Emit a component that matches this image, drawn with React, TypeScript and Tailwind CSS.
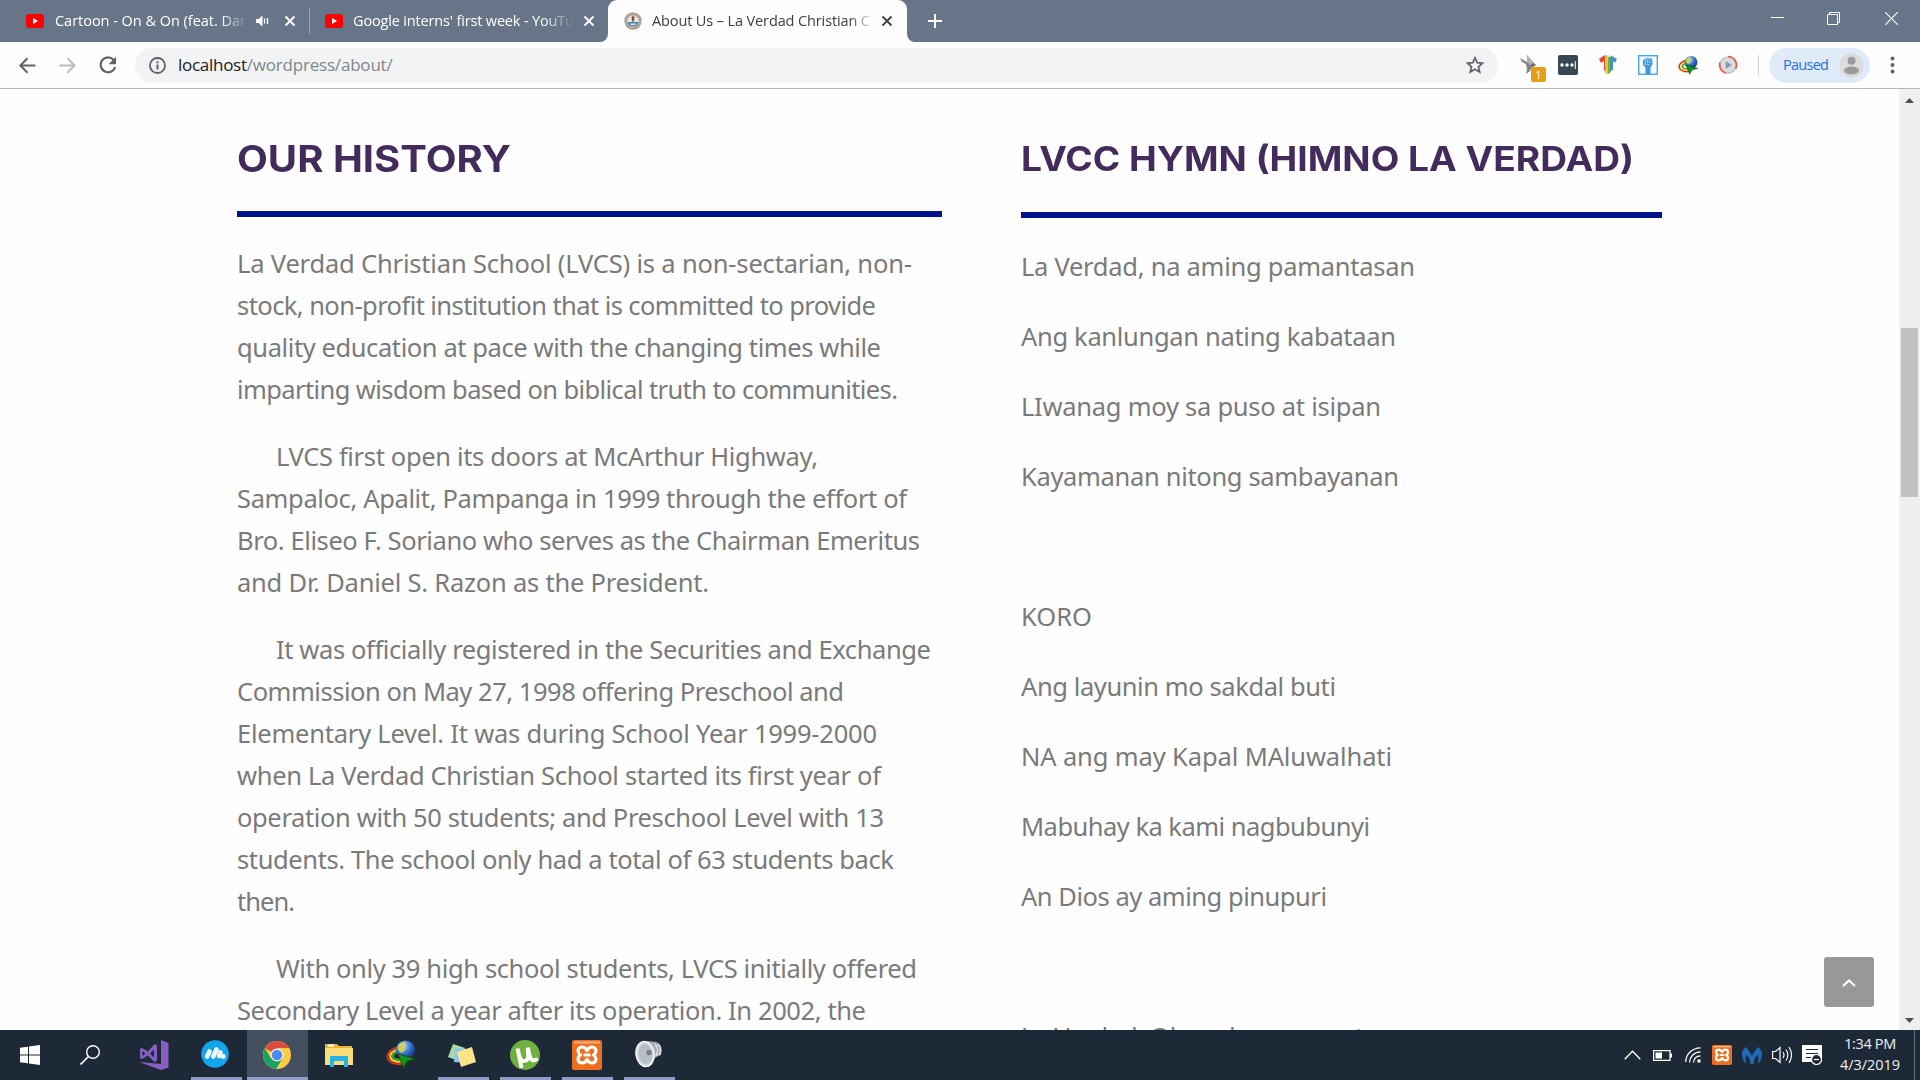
import { useLayoutEffect, useRef, type ReactNode } from "react";

/** One line of text tracked (or, with `stretch`, widened) so that it spans exactly `w` pixels. */
function Fit({ w, children, className = "", stretch = false }: { w: number; children: string; className?: string; stretch?: boolean }) {
  const ref = useRef<HTMLSpanElement>(null);
  useLayoutEffect(() => {
    const el = ref.current;
    if (!el) return;
    el.style.letterSpacing = "0px";
    el.style.transform = "none";
    const natural = el.getBoundingClientRect().width;
    if (stretch) el.style.transform = `scaleX(${w / natural})`;
    else el.style.letterSpacing = `${(w - natural) / (children.length - 1)}px`;
  }, [w, children, stretch]);
  return (
    <span ref={ref} className={`inline-block origin-left whitespace-pre ${className}`}>
      {children}
    </span>
  );
}

type TextLine = [text: string, width: number];

const history: TextLine[][] = [
  [
    ["La Verdad Christian School (LVCS) is a non-sectarian, non-", 675],
    ["stock, non-profit institution that is committed to provide", 639],
    ["quality education at pace with the changing times while", 644],
    ["imparting wisdom based on biblical truth to communities.", 661],
  ],
  [
    ["LVCS first open its doors at McArthur Highway,", 542],
    ["Sampaloc, Apalit, Pampanga in 1999 through the effort of", 670],
    ["Bro. Eliseo F. Soriano who serves as the Chairman Emeritus", 683],
    ["and Dr. Daniel S. Razon as the President.", 472],
  ],
  [
    ["It was officially registered in the Securities and Exchange", 655],
    ["Commission on May 27, 1998 offering Preschool and", 607],
    ["Elementary Level. It was during School Year 1999-2000", 640],
    ["when La Verdad Christian School started its first year of", 644],
    ["operation with 50 students; and Preschool Level with 13", 647],
    ["students. The school only had a total of 63 students back", 657],
    ["then.", 58],
  ],
  [
    ["With only 39 high school students, LVCS initially offered", 641],
    ["Secondary Level a year after its operation. In 2002, the", 629],
  ],
];

const hymn: TextLine[] = [
  ["La Verdad, na aming pamantasan", 394],
  ["Ang kanlungan nating kabataan", 375],
  ["LIwanag moy sa puso at isipan", 360],
  ["Kayamanan nitong sambayanan", 378],
  ["", 0],
  ["KORO", 71],
  ["Ang layunin mo sakdal buti", 315],
  ["NA ang may Kapal MAluwalhati", 371],
  ["Mabuhay ka kami nagbubunyi", 349],
  ["An Dios ay aming pinupuri", 306],
  ["", 0],
  ["La Verdad, Oh aming pamantasan", 398],
];

function YouTube() {
  return (
    <svg className="h-[14px] w-[18px] shrink-0" viewBox="0 0 18 14">
      <rect width="18" height="14" rx="3" fill="#f00" />
      <path d="M7 4v6l5-3z" fill="#fff" />
    </svg>
  );
}

function Cross({ color }: { color: string }) {
  return (
    <svg className="h-[12px] w-[12px] shrink-0" viewBox="0 0 12 12">
      <path d="M1.5 1.5l9 9M10.5 1.5l-9 9" stroke={color} strokeWidth="1.9" />
    </svg>
  );
}

function SchoolSeal() {
  return (
    <svg className="h-[18px] w-[18px] shrink-0" viewBox="0 0 18 18">
      <circle cx="9" cy="9" r="8.7" fill="#a39a8f" />
      <circle cx="9" cy="9" r="7.2" fill="none" stroke="#cfc9c0" strokeDasharray="1 1" />
      <circle cx="9" cy="9" r="5.8" fill="#e9e7e4" />
      <path d="M3.5 10h11a5.7 5.7 0 0 1-11 0z" fill="#3f84ab" />
      <path d="M6 11.500h6l-1 1.600H7z" fill="#e9eef2" />
      <path d="M9 3.200l2 2.800H7z" fill="#c2453a" />
      <path d="M7.800 5h2.400v4.500H7.800z" fill="#8a4642" />
    </svg>
  );
}

function TabBar() {
  return (
    <div className="flex h-[42px] bg-[#687588] font-['Open_Sans'] text-[14.500px] leading-[40px]">
      <div className="flex w-[309px] items-center pl-[26px]">
        <YouTube />
        <div className="ml-[11px] w-[192px] overflow-hidden text-white [mask-image:linear-gradient(to_right,#000_165px,transparent_194px)]">
          <Fit w={191}>Cartoon - On & On (feat. Dar</Fit>
        </div>
        <svg className="ml-[9px] h-[12px] w-[13px] shrink-0" viewBox="0 0 13 12">
          <path d="M0 4h2.500L6.500 .5v11L2.500 8H0z" fill="#fff" />
          <path d="M8.500 3.500v5M11.500 3v6" stroke="#fff" strokeWidth="1.300" />
        </svg>
        <div className="ml-[15px] flex">
          <Cross color="#fff" />
        </div>
      </div>
      <div className="mt-[9px] h-[25px] w-px bg-[#9ba4b0]" />
      <div className="flex w-[298px] items-center pl-[15px]">
        <YouTube />
        <div className="ml-[10px] w-[221px] overflow-hidden text-white [mask-image:linear-gradient(to_right,#000_190px,transparent_221px)]">
          <Fit w={221}>Google interns' first week - YouTu</Fit>
        </div>
        <div className="ml-[9px] flex">
          <Cross color="#fff" />
        </div>
      </div>
      <div className="flex flex-1">
        <svg className="-ml-[8px] mt-[34px] h-[8px] w-[8px] shrink-0" viewBox="0 0 8 8">
          <path d="M8 0v8H0a8 8 0 0 0 8-8z" fill="#fefefe" />
        </svg>
        <div className="flex w-[299px] items-center rounded-t-[9px] bg-[#fefefe] pl-[16px] text-[#3c4043]">
          <SchoolSeal />
          <div className="ml-[10px] w-[219px] overflow-hidden [mask-image:linear-gradient(to_right,#000_198px,transparent_222px)]">
            <Fit w={218}>About Us – La Verdad Christian C</Fit>
          </div>
          <div className="ml-[10px] flex">
            <Cross color="#3f4347" />
          </div>
        </div>
        <svg className="mt-[34px] h-[8px] w-[8px] shrink-0" viewBox="0 0 8 8">
          <path d="M0 0v8h8a8 8 0 0 1-8-8z" fill="#fefefe" />
        </svg>
        <svg className="mt-[13px] ml-[12px] h-[16px] w-[16px]" viewBox="0 0 16 16">
          <path d="M8 1v14M1 8h14" stroke="#fff" strokeWidth="2" />
        </svg>
      </div>
      <div className="flex pt-[12px] pr-[22px]">
        <svg className="h-[13px] w-[13px]" viewBox="0 0 13 13">
          <path d="M0 5.500h13" stroke="#fff" />
        </svg>
        <svg className="ml-[43px] h-[13px] w-[13px]" viewBox="0 0 13 13">
          <path d="M.5 2.500h10v10H.5zM2.500 2.500V.5h10v10h-2" stroke="#fff" fill="none" />
        </svg>
        <svg className="ml-[45px] h-[13px] w-[13px]" viewBox="0 0 13 13">
          <path d="M.3.3l12.400 12.400M12.700.3L.3 12.700" stroke="#fff" strokeWidth="1.100" />
        </svg>
      </div>
    </div>
  );
}

function IdmGlobe({ className }: { className: string }) {
  return (
    <svg className={`shrink-0 ${className}`} viewBox="0 0 30 28">
      <defs>
        <radialGradient id="globe" cx=".38" cy=".3" r=".75">
          <stop offset="0" stopColor="#cfe6ff" />
          <stop offset=".45" stopColor="#3a7fd6" />
          <stop offset="1" stopColor="#0d2a6a" />
        </radialGradient>
      </defs>
      <path d="M13 7C4 9 .5 14 2 18.500s9 6.500 15 5" fill="none" stroke="#d9341b" strokeWidth="2.200" />
      <path d="M13 9.200C6 11 3.500 14 4.500 17.500s7 5 12.500 3.800" fill="none" stroke="#f4d02a" strokeWidth="2.200" />
      <path d="M13 11.400c-4.500 1-6.800 3.200-6 5.600s5 3.300 9 2.300" fill="none" stroke="#3fa23a" strokeWidth="2.200" />
      <circle cx="19.500" cy="10" r="9.500" fill="url(#globe)" />
      <path d="M12 6c2-3 5-4 7-4l1 3-2 1 1 4-3 3c-3-1-5-4-4-7z" fill="#d3d548" opacity=".9" />
      <path d="M12 14l17.500 5-8.500 2.500L17.500 28z" fill="#12941a" stroke="#07480c" strokeWidth=".8" />
    </svg>
  );
}

function Toolbar() {
  return (
    <div className="flex h-[47px] items-center border-b border-[#b6b4b6] bg-[#fefefe] pr-[19px] pl-[19px] font-['Open_Sans']">
      <svg className="h-[17px] w-[17px]" viewBox="0 0 17 17">
        <path d="M16.500 8.500H1.500M8.500 1.200L1.300 8.500l7.200 7.300" stroke="#5f6368" strokeWidth="2" fill="none" />
      </svg>
      <svg className="ml-[23px] h-[17px] w-[17px]" viewBox="0 0 17 17">
        <path d="M.5 8.500h15M8.500 1.200l7.200 7.300-7.200 7.300" stroke="#babcbe" strokeWidth="2" fill="none" />
      </svg>
      <svg className="ml-[23px] h-[18px] w-[18px]" viewBox="0 0 18 18">
        <path d="M15.200 4.600A7.400 7.400 0 1 0 16.200 11" stroke="#5f6368" strokeWidth="2.100" fill="none" />
        <path d="M17 .8v7.400H9.600z" fill="#5f6368" />
      </svg>
      <div className="ml-[18px] flex h-[35px] w-[1363px] items-center rounded-full bg-[#f1f3f4] pr-[14px] pl-[14px]">
        <svg className="h-[17px] w-[17px]" viewBox="0 0 17 17">
          <circle cx="8.500" cy="8.500" r="7.500" fill="none" stroke="#5f6368" strokeWidth="1.800" />
          <path d="M8.500 7.500v5M8.500 4.200v2" stroke="#5f6368" strokeWidth="2" />
        </svg>
        <div className="ml-[12px] flex pb-[2px] text-[17px] leading-[33px]">
          <Fit w={69} className="text-[#202124]">localhost</Fit>
          <Fit w={146} className="text-[#80868b]">/wordpress/about/</Fit>
        </div>
        <svg className="ml-auto h-[18px] w-[18px]" viewBox="0 0 18 18">
          <path d="M9 1.800l2.200 4.900 5.300.5-4 3.600 1.200 5.200L9 13.300 4.300 16l1.200-5.200-4-3.600 5.300-.5z" fill="none" stroke="#5f6368" strokeWidth="1.700" />
        </svg>
      </div>
      <div className="relative ml-[22px] h-[20px] w-[20px]">
        <svg className="h-[20px] w-[20px]" viewBox="0 0 20 20">
          <path d="M0 3l7 4V0l6 7 3 3-4 2-2 4-4 3 1-5-1-5-4-2z" fill="#808284" />
          <path d="M7 0l6 7-2 4-4-4z" fill="#b0b2b4" />
          <path d="M11 9l5 1-4 2z" fill="#5f6264" />
        </svg>
        <div className="absolute top-[12px] left-[11px] flex h-[15px] w-[15px] items-center justify-center rounded-[2px] bg-[#e59f14] text-[11px] leading-none text-white">1</div>
      </div>
      <div className="ml-[18px] flex h-[20px] w-[20px] items-center justify-center rounded-[2px] bg-[#374852]">
        <svg className="h-[8px] w-[16px]" viewBox="0 0 16 8">
          <circle cx="2" cy="4" r="1.700" fill="#fff" />
          <circle cx="7" cy="4" r="1.700" fill="#fff" />
          <circle cx="12" cy="4" r="1.700" fill="#fff" />
          <path d="M15.300 0v8" stroke="#fff" />
        </svg>
      </div>
      <svg className="ml-[20px] h-[20px] w-[20px]" viewBox="0 0 20 20">
        <path d="M6 .5L1 4l2 4 3-2v9.500l2 1V.5z" fill="#e8443a" />
        <path d="M7 .5h3.500v19L7 18z" fill="#f6c52c" />
        <path d="M10 2h3v15l-3 2z" fill="#67b346" />
        <path d="M13 .5L19 4l-2 4-2-2v9l-2.500 1V.5z" fill="#3f8fd0" />
      </svg>
      <svg className="ml-[20px] h-[20px] w-[20px]" viewBox="0 0 20 20">
        <rect x=".7" y=".7" width="18.600" height="18.600" fill="#f2f9ff" stroke="#4da6ee" strokeWidth="1.400" />
        <path d="M5 5.500L6.500 3.800H8l1.500-1 1.500.6 2-.2 1.200 1.200.3 4.800-2 3.300V19H7.500v-6.500L5 10z" fill="#4296dd" />
        <path d="M7.500 4.500v3.500M9.700 4v4M12 4.500v3.500M6 9l5.500.5" stroke="#d7ecfc" strokeWidth=".7" />
      </svg>
      <IdmGlobe className="ml-[20px] h-[20px] w-[20px]" />
      <svg className="ml-[20px] h-[20px] w-[20px]" viewBox="0 0 20 20">
        <circle cx="10" cy="10" r="8" fill="#d9dce0" stroke="#bfc3c8" strokeWidth="1.500" />
        <path d="M10 1.500a8.500 8.500 0 0 1 7.500 12.500M2 7.500a8.500 8.500 0 0 0 6 10.700" fill="none" stroke="#ee5a3a" strokeWidth="1.700" />
        <path d="M7.700 6v8l6-4z" fill="#8797a8" />
      </svg>
      <div className="ml-[20px] h-[20px] w-px bg-[#cfd1d4]" />
      <div className="ml-[10px] flex h-[35px] w-[101px] items-center rounded-full bg-[#e0ebfa] pl-[14px] text-[14.500px] text-[#2a6fe0]">
        <Fit w={46} className="pb-[1px]">Paused</Fit>
        <svg className="ml-[11px] h-[25px] w-[25px]" viewBox="0 0 25 25">
          <circle cx="12.500" cy="12.500" r="12.300" fill="#dcdcdc" />
          <circle cx="12.500" cy="7.800" r="4" fill="#9b9b9b" />
          <ellipse cx="12.500" cy="17.500" rx="7.500" ry="4" fill="#9b9b9b" />
        </svg>
      </div>
      <svg className="ml-[20px] h-[18px] w-[5px]" viewBox="0 0 5 18">
        <circle cx="2.500" cy="2.500" r="2" fill="#5f6368" />
        <circle cx="2.500" cy="9" r="2" fill="#5f6368" />
        <circle cx="2.500" cy="15.500" r="2" fill="#5f6368" />
      </svg>
    </div>
  );
}

function Page() {
  return (
    <div className="relative flex h-[941px] overflow-hidden bg-[#fefefe]">
      <div className="flex flex-1 pl-[237px] text-[25.500px] text-[#7a7a7a]">
        <section className="w-[705px] shrink-0">
          <h2 className="mt-[45px] h-[49px] font-['Inter'] text-[36.500px] leading-[51px] font-bold text-[#432c5b]">
            <Fit w={274} stretch>OUR HISTORY</Fit>
          </h2>
          <div className="mt-[28px] h-[6px] bg-[#00138a]" />
          <div className="mt-[25px] flex flex-col gap-[25px]">
            {history.map((lines, p) => (
              <div key={p}>
                {lines.map(([text, w], i) => (
                  <div key={text} className={`h-[42px] leading-[42px] ${p > 0 && i === 0 ? "pl-[39px]" : ""}`}>
                    <Fit w={w}>{text}</Fit>
                  </div>
                ))}
              </div>
            ))}
          </div>
        </section>
        <section className="ml-[79px] w-[641px] shrink-0">
          <h2 className="mt-[45px] h-[49px] font-['Inter'] text-[33.500px] leading-[51px] font-bold text-[#432c5b]">
            <Fit w={613} stretch>LVCC HYMN (HIMNO LA VERDAD)</Fit>
          </h2>
          <div className="mt-[29px] h-[6px] bg-[#00138a]" />
          <div className="mt-[13px]">
            {hymn.map(([text, w], i) => (
              <div key={i} className="h-[70px] leading-[70px]">
                {text && <Fit w={w}>{text}</Fit>}
              </div>
            ))}
          </div>
        </section>
      </div>
      <div className="absolute right-[46px] bottom-[23px] flex h-[50px] w-[50px] items-center justify-center rounded-[3px] bg-[#989898]">
        <svg className="mt-[2px] h-[8px] w-[14px]" viewBox="0 0 14 8">
          <path d="M1 7l6-5.500L13 7" fill="none" stroke="#fff" strokeWidth="2.200" />
        </svg>
      </div>
      <div className="flex w-[21px] flex-col items-center bg-[#efefef]">
        <svg className="mt-[9px] h-[5px] w-[9px]" viewBox="0 0 9 5">
          <path d="M0 5h9L4.500 0z" fill="#505050" />
        </svg>
        <div className="mt-[225px] h-[169px] w-[17px] bg-[#c1c1c1]" />
        <svg className="mt-auto mb-[7px] h-[5px] w-[9px]" viewBox="0 0 9 5">
          <path d="M0 0h9L4.500 5z" fill="#505050" />
        </svg>
      </div>
    </div>
  );
}

function Task({ children, running, active, w }: { children: ReactNode; running?: boolean; active?: boolean; w: string }) {
  return (
    <div className={`flex h-[50px] flex-col items-center ${w} ${active ? "bg-[#444f60]" : ""}`}>
      <div className="flex h-[47px] items-center justify-center pt-[3px]">{children}</div>
      {(running || active) && <div className={`h-[3px] bg-[#8e9ec6] ${active ? "w-full" : "w-[51px]"}`} />}
    </div>
  );
}

function Xampp({ className }: { className: string }) {
  return (
    <svg className={className} viewBox="0 0 30 30">
      <rect width="30" height="30" rx="2.500" fill="#ee6f20" />
      <path d="M2 1.500h26v2H2z" fill="#f9b184" />
      <path
        d="M15 10.500c-1-2-2.500-3.500-5-3.500-2.500 0-4 1.800-4 4 0 1.800 1 3 2.500 4-1.500 1-2.500 2.200-2.500 4 0 2.200 1.500 4 4 4s4-1.500 5-3.500c1 2 2.500 3.500 5 3.500s4-1.800 4-4c0-1.800-1-3-2.500-4 1.500-1 2.500-2.200 2.500-4 0-2.200-1.500-4-4-4s-4 1.500-5 3.500zM11.500 15h7"
        fill="none"
        stroke="#fff"
        strokeWidth="3.200"
        strokeLinejoin="round"
      />
    </svg>
  );
}

function Taskbar() {
  return (
    <div className="flex h-[50px] bg-[#1e2938]">
      <Task w="w-[60px]">
        <svg className="h-[20px] w-[20px]" viewBox="0 0 20 20">
          <path d="M0 2.800l8-1.100v7.800H0zM9 1.500L20 0v9.500H9zM0 10.500h8v7.800l-8-1.100zM9 10.500h11V20L9 18.500z" fill="#fff" />
        </svg>
      </Task>
      <Task w="w-[60px]">
        <svg className="h-[20px] w-[20px]" viewBox="0 0 20 20">
          <circle cx="13" cy="7" r="6.300" fill="none" stroke="#fff" strokeWidth="1.400" />
          <path d="M8.500 11.500L.5 19.500" stroke="#fff" strokeWidth="1.600" />
        </svg>
      </Task>
      <Task w="w-[66px]">
        <svg className="ml-[2px] h-[30px] w-[30px]" viewBox="0 0 30 30">
          <path d="M22 0l7.500 3v24.500L22 30 0 22l22 2z" fill="#865fc5" />
          <path fillRule="evenodd" d="M1 9l2-1 6 3.500L15.500 4 18 5.500v15L15.500 22 9 15.500 3 19l-2-1zM3.500 11v5l3-2.500zM15 9.500l-4 4 4 4z" fill="#865fc5" />
        </svg>
      </Task>
      <Task w="w-[60px]" running>
        <svg className="-mt-[3px] -ml-[2px] h-[28px] w-[28px]" viewBox="0 0 28 28">
          <circle cx="14" cy="14" r="13.800" fill="#12a5ec" />
          <path d="M6 16.500l2.500-5M12.200 16.500l3.300-7M18 16l1.500-3.500" stroke="#f4fafe" strokeWidth="4.600" strokeLinecap="round" />
          <circle cx="22.300" cy="16.500" r="2.400" fill="#fff" />
        </svg>
      </Task>
      <div className="w-px" />
      <Task w="w-[61px]" active>
        <svg className="-ml-[1px] h-[28px] w-[28px]" viewBox="0 0 28 28">
          <circle cx="14" cy="14" r="14" fill="#fccd42" />
          <path d="M14 14L1.900 7A14 14 0 0 1 26.100 7H14z" fill="#dd4b3e" />
          <path d="M1.900 7A14 14 0 0 0 13 28l6.500-10.500L14 14 8 17.500z" fill="#19a15f" />
          <circle cx="14" cy="14" r="6.500" fill="#f3f3f3" />
          <circle cx="14" cy="14" r="5.200" fill="#4c8bf5" />
        </svg>
      </Task>
      <Task w="w-[62px]">
        <svg className="-mt-[1px] h-[24px] w-[28px]" viewBox="0 0 28 24">
          <path d="M0 1h12l2 2h13v5H0z" fill="#e8b637" />
          <path d="M3 1.500h6v2H3z" fill="#fff" />
          <path d="M0 5h28v17H0z" fill="#fddc7c" />
          <path d="M5 13h18v11h-4v-6H9v6H5z" fill="#23b4e8" />
        </svg>
      </Task>
      <Task w="w-[62px]">
        <IdmGlobe className="-mt-[2px] h-[28px] w-[30px]" />
      </Task>
      <Task w="w-[62px]" running>
        <svg className="-ml-[2px] h-[26px] w-[30px]" viewBox="0 0 30 26">
          <path d="M6 2l12 4-6 13L1 15z" fill="#a6dc9f" />
          <path d="M8 6l12 1v14L7 20z" fill="#8cc5f4" />
          <path d="M10 10l15-5 4 15-15 5z" fill="#fbe48a" />
        </svg>
      </Task>
      <Task w="w-[62px]" running>
        <svg className="-ml-[1px] h-[30px] w-[30px]" viewBox="0 0 30 30">
          <circle cx="15" cy="15" r="15" fill="#6fb03f" />
          <path d="M7.500 8.500L11.500 28M8.500 12c1.500 8 3.500 9.500 6.500 9s4-3 2.500-12.500M18 7.500c1.500 9.500 2.500 13 5.500 13 1.500 0 2.500-.5 4-2" fill="none" stroke="#fff" strokeWidth="3.800" />
        </svg>
      </Task>
      <Task w="w-[62px]" running>
        <Xampp className="h-[30px] w-[30px]" />
      </Task>
      <Task w="w-[62px]" running>
        <svg className="-mt-[2px] -ml-[1px] h-[28px] w-[28px]" viewBox="0 0 28 28">
          <path d="M12 1l9 1c5 2 7 6 5 13l-5 2-8 10z" fill="#a9aeb4" />
          <path d="M20 4c3 3 3 8 1 12M23 4c3 3 3 8 1 11" stroke="#e8eaec" fill="none" strokeWidth="1.200" />
          <ellipse cx="10" cy="14" rx="9" ry="12.500" fill="#d5d9de" stroke="#f4f5f6" strokeWidth="1.500" transform="rotate(-8 10 14)" />
          <ellipse cx="10.500" cy="14" rx="7" ry="10" fill="#b9bfc8" transform="rotate(-8 10.500 14)" />
          <circle cx="14" cy="12.500" r="2.800" fill="#7a7f86" />
        </svg>
      </Task>
      <div className="ml-auto flex items-center">
        <svg className="h-[10px] w-[17px]" viewBox="0 0 17 10">
          <path d="M.7 9.300l7.800-8 7.800 8" fill="none" stroke="#fff" strokeWidth="1.300" />
        </svg>
        <svg className="ml-[12px] h-[11px] w-[19px]" viewBox="0 0 19 11">
          <path d="M.6.6h16.400v9.800H.6z" fill="none" stroke="#fff" strokeWidth="1.200" />
          <path d="M2.500 2.500h6.500v6H2.500zM17 3.500h2v4h-2z" fill="#fff" />
        </svg>
        <svg className="ml-[13px] h-[16px] w-[16px]" viewBox="0 0 16 16">
          <path d="M.7 15C1 7 7 1 15.500.8M4.500 15.500c.3-6 4.500-10.500 11-10.700M8.500 15.500c.3-4 3-6.500 7-6.700" fill="none" stroke="#fff" strokeWidth="1.200" />
          <path d="M12.500 12.500h3v3h-3z" fill="#fff" />
        </svg>
        <Xampp className="ml-[11px] h-[20px] w-[20px]" />
        <svg className="ml-[10px] h-[17px] w-[20px]" viewBox="0 0 20 17">
          <path d="M4 0c1 1 5 6 6 9 1-3 5-8 6-9 3 2 4 5 4 8 0 4-2 7-4 9 .5-3 1-6-.5-9-2 2-4 5-4 9H8.500c0-4-2-7-4-9C3 11 3.500 14 4 17c-2-2-4-5-4-9s1-6 4-8z" fill="#1f69b8" />
        </svg>
        <svg className="ml-[10px] h-[18px] w-[20px]" viewBox="0 0 20 18">
          <path d="M.6 5.500h3L8 1.500v15l-4.400-4H.6z" fill="none" stroke="#fff" strokeWidth="1.200" />
          <path d="M11 6c1.200 1.800 1.200 4.200 0 6M14 3.500c2.200 3.300 2.200 7.700 0 11M17 1c3.200 5 3.200 11 0 16" fill="none" stroke="#fff" strokeWidth="1.100" />
        </svg>
        <svg className="ml-[10px] h-[20px] w-[20px]" viewBox="0 0 20 20">
          <path d="M0 0h20v17H6l-3 0H0z" fill="#fff" />
          <path d="M4 4.500h12M4 8.500h12M4 12.500h5" stroke="#1e2938" strokeWidth="1.200" />
          <circle cx="14.500" cy="14.500" r="5" fill="#1e2938" stroke="#fff" strokeWidth="1.200" />
          <path d="M12 14.500h5" stroke="#fff" strokeWidth="1.200" />
        </svg>
        <div className="ml-[18px] flex w-[60px] flex-col items-center pb-[2px] font-['Open_Sans'] text-[14.500px] leading-[21px] text-[#eef0f2]">
          <Fit w={52}>1:34 PM</Fit>
          <Fit w={60}>4/3/2019</Fit>
        </div>
        <div className="ml-[14px] h-[50px] w-px bg-[#6c7480]" />
        <div className="w-[5px]" />
      </div>
    </div>
  );
}

export default function App() {
  return (
    <div className="h-[1080px] w-[1920px] overflow-hidden bg-[#fefefe] font-['Noto_Sans',sans-serif]">
      <TabBar />
      <Toolbar />
      <Page />
      <Taskbar />
    </div>
  );
}
